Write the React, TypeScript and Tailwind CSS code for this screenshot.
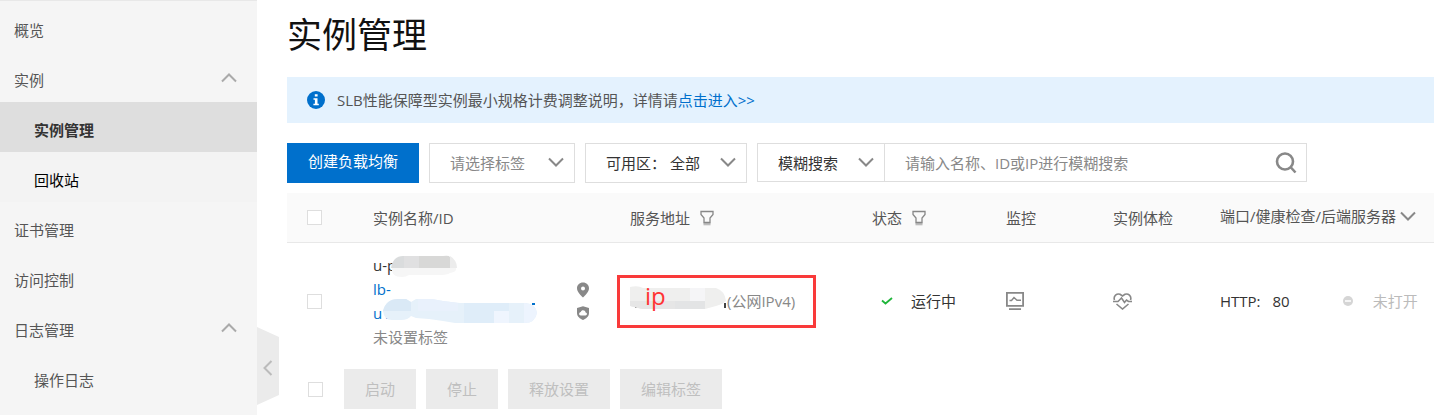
import type { ReactNode } from "react";

const FONT = "font-['Open_Sans','Noto_Sans_CJK_SC',sans-serif]";

function Chevron({ dir = "down", className = "" }: { dir?: "up" | "down" | "left"; className?: string }) {
  const d = dir === "up" ? "M1 8.5 8 1.5 15 8.5" : dir === "down" ? "M1 1.5 8 8.5 15 1.5" : "M8.5 1 1.5 8 8.5 15";
  const size = dir === "left" ? "h-4 w-[10px]" : "h-[10px] w-4";
  return (
    <svg aria-hidden="true" viewBox={dir === "left" ? "0 0 10 16" : "0 0 16 10"} className={`${size} shrink-0 ${className}`} fill="none" stroke="currentColor" strokeWidth="2">
      <path d={d} />
    </svg>
  );
}

function FilterIcon() {
  return (
    <svg aria-hidden="true" viewBox="0 0 14 16" className="h-4 w-[14px] shrink-0 text-[#888]" fill="none" stroke="currentColor">
      <path d="M1 1.500h12v3L10 8v4.500H4V8L1 4.500z" strokeWidth="1.300" />
      <path d="M3.500 14h7" strokeWidth="2.600" opacity=".55" />
    </svg>
  );
}

function NavItem({ children, sub, active, dark, open }: { children: ReactNode; sub?: boolean; active?: boolean; dark?: boolean; open?: boolean }) {
  const tone = active ? "bg-[#dedede] font-bold text-[#333]" : dark ? "bg-[#f3f3f3] text-black" : "text-[#555]";
  return (
    <li>
      <a href="#" className={`flex h-[50px] items-center justify-between pr-5 pt-[6px] ${sub ? "pl-[34px]" : "pl-[14px]"} ${tone}`}>
        {children}
        {open && <Chevron dir="up" className="mb-1 text-[#aaa]" />}
      </a>
    </li>
  );
}

function Checkbox({ label }: { label: string }) {
  return <input type="checkbox" aria-label={label} className="block size-[15px] shrink-0 appearance-none border border-[#dedede] bg-white checked:bg-[#0070cc]" />;
}

function Select({ label, option, className, tone }: { label: string; option: string; className: string; tone: string }) {
  return (
    <label className={`relative flex items-center border-[#dedede] ${className}`}>
      <select aria-label={label} className={`h-full w-full appearance-none bg-transparent pl-5 pr-9 outline-none ${tone}`}>
        <option>{option}</option>
      </select>
      <Chevron className="pointer-events-none absolute right-[10px] top-[13px] text-[#888]" />
    </label>
  );
}

const ACTIONS = ["启动", "停止", "释放设置", "编辑标签"];

export default function App() {
  return (
    <div className={`flex overflow-hidden bg-white text-[15px] leading-6 text-[#555] ${FONT}`}>
      <aside className="relative w-[257px] shrink-0 border-t border-[#e8e8e8] bg-[#f5f5f5] pt-px pb-2">
        <nav aria-label="主导航">
          <ul>
            <NavItem>概览</NavItem>
            <NavItem open>实例</NavItem>
            <NavItem sub active>实例管理</NavItem>
            <NavItem sub dark>回收站</NavItem>
            <NavItem>证书管理</NavItem>
            <NavItem>访问控制</NavItem>
            <NavItem open>日志管理</NavItem>
            <NavItem sub>操作日志</NavItem>
          </ul>
        </nav>
        <button aria-label="收起导航" className="absolute left-full top-[326px] flex h-[78px] w-[22px] items-center justify-center bg-[#ebebeb] pt-1 text-[#bbb] [clip-path:polygon(0_0,100%_10px,100%_68px,0_100%)]">
          <Chevron dir="left" />
        </button>
      </aside>

      <main className="min-w-0 grow pl-[30px]">
        <h1 className="pt-[11px] pb-[18px] text-[35px] leading-[48px] text-[#111]">实例管理</h1>

        <div className="flex h-[46px] items-center bg-[#e4f2fe] pl-5">
          <svg aria-hidden="true" viewBox="0 0 18 18" className="size-[18px] shrink-0">
            <circle cx="9" cy="9" r="9" fill="#0070cc" />
            <path d="M7.800 3.300h2.800v2.300H7.800zM6.500 7.200h4v5.600h1.300v1.500H6.400v-1.500h1.500V8.700H6.500z" fill="#fff" />
          </svg>
          <p className="ml-3">
            SLB性能保障型实例最小规格计费调整说明，详情请
            <a href="#" className="text-[#0070cc]">点击进入&gt;&gt;</a>
          </p>
        </div>

        <div className="mt-5 flex items-start">
          <button className="h-10 bg-[#0070cc] px-[21px] pb-1 text-white">创建负载均衡</button>
          <Select label="标签" option="请选择标签" className="ml-[10px] h-10 w-[146px] border" tone="text-[#888]" />
          <Select label="可用区" option="可用区： 全部" className="ml-[10px] h-10 w-[162px] border" tone="text-[#333]" />
          <div className="ml-[10px] flex h-[39px] w-[550px] border border-[#dedede]">
            <Select label="搜索方式" option="模糊搜索" className="w-[127px] border-r" tone="text-[#333]" />
            <input aria-label="搜索" placeholder="请输入名称、ID或IP进行模糊搜索" className="min-w-0 grow pl-5 outline-none placeholder:text-[#888]" />
            <button aria-label="搜索" className="px-[9px] text-[#888]">
              <svg aria-hidden="true" viewBox="0 0 22 22" className="size-[22px]" fill="none" stroke="currentColor" strokeWidth="2.600">
                <circle cx="10" cy="9.500" r="8" />
                <path d="m15.500 15 5 5.500" />
              </svg>
            </button>
          </div>
        </div>

        <table className="mt-[10px] w-full table-fixed text-left">
          <thead>
            <tr className="h-[49px] border-b border-[#e8e8e8] bg-[#fafafa] whitespace-nowrap [&>th]:p-0 [&>th]:pt-px [&>th]:pl-5 [&>th]:font-normal">
              <th className="w-[66px]"><Checkbox label="全选" /></th>
              <th className="w-[257px]">实例名称/ID</th>
              <th className="w-[242px]"><span className="flex items-center gap-[10px]">服务地址<FilterIcon /></span></th>
              <th className="w-[134px]"><span className="flex items-center gap-[10px]">状态<FilterIcon /></span></th>
              <th className="w-[107px]">监控</th>
              <th className="w-[107px]">实例体检</th>
              <th><button className="flex items-center gap-1 pb-1">端口/健康检查/后端服务器<Chevron className="text-[#888]" /></button></th>
            </tr>
          </thead>
          <tbody>
            <tr className="h-[118px] [&>td]:p-0 [&>td]:pl-5">
              <td><Checkbox label="选择实例" /></td>
              <td>
                <div className="flex items-center justify-between pr-5">
                  <div>
                    <p className="relative text-[#333]">
                      u-p
                      <svg aria-hidden="true" viewBox="0 0 66 23" className="absolute left-[18px] top-[2px] h-[23px] w-[66px]">
                        <path d="M1 13Q0 22 11 22Q15 22 18 20H48Q56 20 59 18Q66 17 65 13z" fill="#f6f6f6" />
                        <path d="M0 13Q2 1 12 1h16v12z" fill="#dadcdd" />
                        <path d="M13 1h15v12H13z" fill="#e0e0e1" />
                        <path d="M28 1h24q6-1 7 1v11H28z" fill="#d8d8d7" />
                        <path d="M59 1q7 4 7 12h-7z" fill="#ececec" />
                      </svg>
                    </p>
                    <p className="relative text-[#0070cc]">
                      <a href="#">lb-<br />u1</a>
                      <svg aria-hidden="true" viewBox="0 0 154 25" className="absolute left-[10px] top-[21px] h-[25px] w-[154px]">
                        <path d="M149 5h3v2h-3z" fill="#0070cc" />
                        <path d="M0 13Q3 1 15 1H23L28 4 33 1H49L60 3 77 5H143Q153 6 154 15Q152 25 142 25H72L60 23 46 21 33 20 28 18Q25 22 18 22H9Q1 22 0 13z" fill="#e6f1fa" />
                        <path d="M0 13Q3 1 15 1H23L28 4V13z" fill="#dae9f6" />
                        <path d="M35 1h14l11 2 15 2v8H35z" fill="#e9f1fc" />
                        <path d="M81 5h45v20H81z" fill="#dfedf9" />
                        <path d="M111 13h15v12h-15z" fill="#eff5fe" />
                        <path d="M141 5q11 0 13 10q-2 10-13 10z" fill="#edf4fe" />
                      </svg>
                    </p>
                    <p className="text-[#888]">未设置标签</p>
                  </div>
                  <div className="flex flex-col gap-2 text-[#888]">
                    <svg aria-hidden="true" viewBox="0 0 14 16" className="h-4 w-[14px]" fill="currentColor">
                      <path fillRule="evenodd" d="M7 .5c-3.500 0-6 2.500-6 5.800C1 10 5 13.500 7 15.500c2-2 6-5.500 6-9.200C13 3 10.500.5 7 .5zm0 4a2 2 0 1 1 0 4 2 2 0 0 1 0-4z" />
                    </svg>
                    <svg aria-hidden="true" viewBox="0 0 14 14" className="h-[14px] w-[14px]" fill="currentColor">
                      <path fillRule="evenodd" d="M7 .3 13 2v5c0 3.500-3 5.700-6 7-3-1.300-6-3.500-6-7V2zM4.800 9.500h4.600c2 0 2.100-2.700.2-2.900C9.300 3.500 5.300 3.500 4.800 6c-2.200.2-2.200 3.500 0 3.500z" />
                    </svg>
                  </div>
                </div>
              </td>
              <td>
                <div className="relative -ml-[13px] flex h-[53px] w-[199px] items-center border-[3px] border-[#f93a3a] pl-[107px] text-[#888]">
                  <svg aria-hidden="true" viewBox="0 0 98 23" className="absolute left-[10px] top-2 h-[23px] w-[98px]">
                    <path d="M94 17h2v5h-2zM5 20h2v2H5z" fill="#444" />
                    <path d="M0 1Q8-1 13 2H86Q95 5 96 15L92 18 86 20 75 23H12L0 20z" fill="#efefee" />
                    <path d="M0 15h45v8H12L0 20z" fill="#e6e6e6" />
                    <path d="M45 15h30v8H45z" fill="#e3e4e5" />
                    <path d="M60 2h15v13H60z" fill="#f5f5f7" />
                  </svg>
                  <span className="absolute left-[25px] top-[6px] text-[24px] leading-6 text-[#ff3434]">ip</span>
                  (公网IPv4)
                </div>
              </td>
              <td>
                <span className="flex items-center pl-[9px] text-[#333]">
                  <svg aria-hidden="true" viewBox="0 0 12 8" className="mr-[18px] h-2 w-3" fill="none" stroke="#1fb53a" strokeWidth="1.800"><path d="m1 3.500 3.500 3L11 1" /></svg>
                  运行中
                </span>
              </td>
              <td>
                <a href="#" aria-label="监控" className="block text-[#888]">
                  <svg aria-hidden="true" viewBox="0 0 18 18" className="size-[18px]" fill="none" stroke="currentColor" strokeWidth="1.800"><path d="M.9.900h16.200v13H.900zM3 17.100h12" /><path d="M3.500 8.500h2l2.500-3 3 2.700h4" strokeWidth="1.500" /></svg>
                </a>
              </td>
              <td>
                <a href="#" aria-label="实例体检" className="block text-[#888]">
                  <svg aria-hidden="true" viewBox="0 0 19 17" className="h-[17px] w-[19px]" fill="none" stroke="currentColor" strokeWidth="1.600"><path d="M1.500 7C0 3 4 0 7 1.300L9.500 3 12 1.300C15 0 19 3 17.500 7M0 8.500h5L8.500 5l3 4.500L13.500 7l2 1.500H19M3.500 11l6 5 6-5" /></svg>
                </a>
              </td>
              <td>
                <div className="flex items-center whitespace-nowrap text-[#333]">
                  <span>HTTP:</span><span className="ml-3">80</span>
                  <svg aria-hidden="true" viewBox="0 0 10 10" className="ml-[53px] size-[10px] shrink-0"><circle cx="5" cy="5" r="5" fill="#d5d5d5" /><path d="M2 5h6" stroke="#fff" strokeWidth="1.500" /></svg>
                  <span className="ml-5 text-[#bbb]">未打开</span>
                </div>
              </td>
            </tr>
          </tbody>
        </table>

        <div className="flex items-center gap-[10px] pb-[6px] pl-[21px] pt-[9px]">
          <div className="pr-[11px]"><Checkbox label="选择全部实例" /></div>
          {ACTIONS.map((a) => (
            <button key={a} disabled className="h-10 bg-[#ebebeb] px-[21px] text-[#bfbfbf]">{a}</button>
          ))}
        </div>
      </main>
    </div>
  );
}
